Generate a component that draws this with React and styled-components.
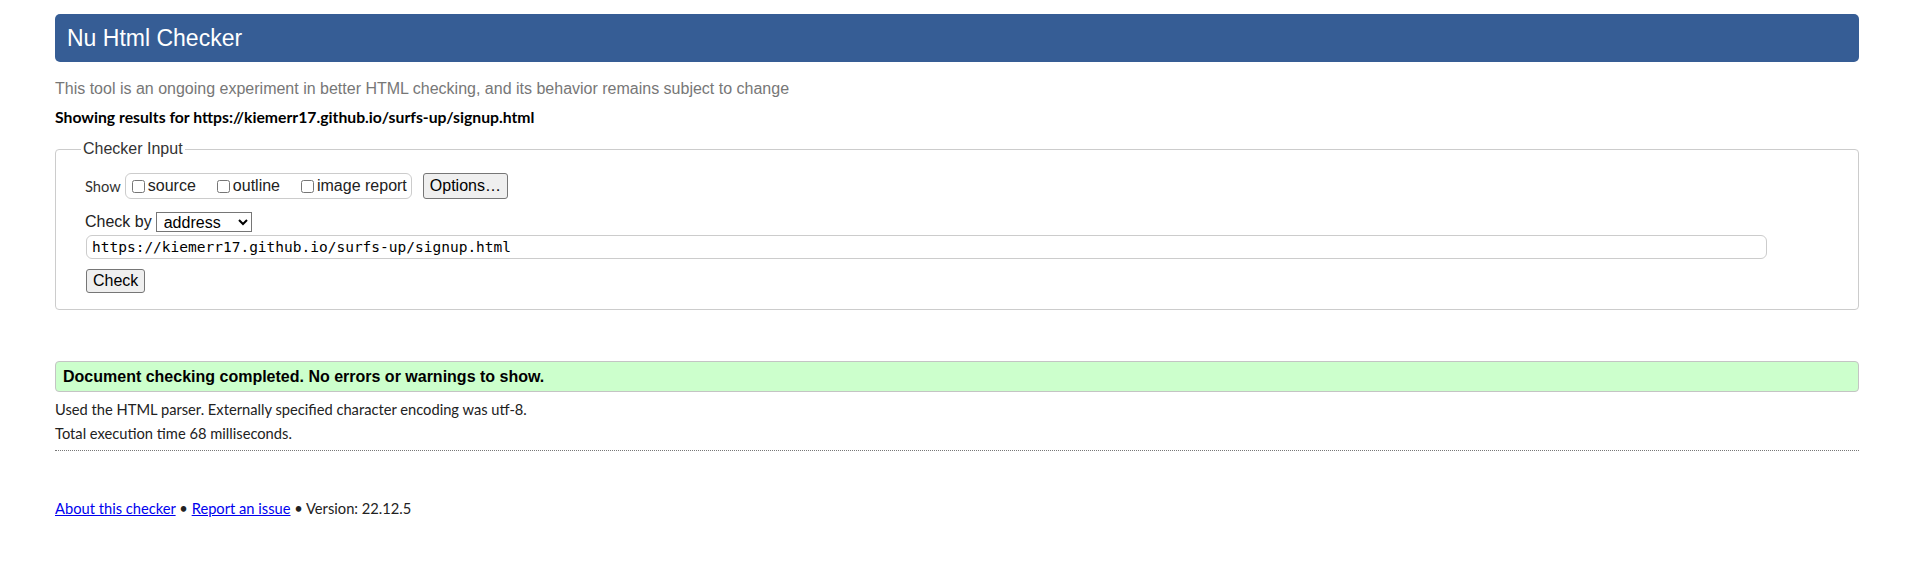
import React from "react";
import styled, { createGlobalStyle } from "styled-components";

const GlobalStyle = createGlobalStyle`
  html, body {
    margin: 0;
    background: #fff;
  }
`;

const sans = `"Liberation Sans", Arial, sans-serif`;
const body = `Lato, "Open Sans", sans-serif`;

export default function App() {
  const url = "https://kiemerr17.github.io/surfs-up/signup.html";
  const shows = ["source", "outline", "image report"];

  return (
    <Page>
      <GlobalStyle />
      <Title>Nu Html Checker</Title>
      <Tagline>
        This tool is an ongoing experiment in better HTML checking, and its
        behavior remains subject to change
      </Tagline>
      <ResultsFor>Showing results for {url}</ResultsFor>

      <Fieldset>
        <Legend>Checker Input</Legend>
        <Row $top={15}>
          <SmallLabel>Show</SmallLabel>
          <CheckGroup>
            {shows.map((s) => (
              <CheckOption key={s}>
                <input type="checkbox" />
                {s}
              </CheckOption>
            ))}
          </CheckGroup>
          <Button $pad={2} $left={11}>
            Options…
          </Button>
        </Row>
        <Row $top={13}>
          <Label>Check by</Label>
          <Select defaultValue="address">
            <option value="address">address</option>
            <option value="file">file upload</option>
            <option value="text">text input</option>
          </Select>
        </Row>
        <Row $top={3}>
          <UrlInput defaultValue={url} />
        </Row>
        <Row $top={10}>
          <Button $pad={1} $left={1}>
            Check
          </Button>
        </Row>
      </Fieldset>

      <Success>Document checking completed. No errors or warnings to show.</Success>
      <Info $top={7}>
        Used the HTML parser. Externally specified character encoding was utf-8.
      </Info>
      <Info $top={4}>Total execution time 68 milliseconds.</Info>
      <Rule />

      <Footer>
        <a href="#about">About this checker</a> • <a href="#issue">Report an issue</a> •
        Version: 22.12.5
      </Footer>
    </Page>
  );
}

const Page = styled.div`
  padding: 14px 58px 40px 55px;
`;

const Title = styled.h1`
  margin: 0;
  height: 48px;
  display: flex;
  align-items: center;
  padding: 0 12px;
  background: #365d95;
  color: #fff;
  font: 400 23px/1 ${sans};
  border-radius: 5px;
`;

const Tagline = styled.p`
  margin: 17px 0 0;
  font: 16px/20px ${sans};
  color: #777;
`;

const ResultsFor = styled.p`
  margin: 8px 0 0;
  font: 700 15.75px/20px ${body};
  color: #000;
`;

const Fieldset = styled.fieldset`
  margin: 13px 0 0;
  padding: 0 14px 16px 29px;
  border: 1px solid #ccc;
  border-radius: 4px;
  min-width: 0;
`;

const Legend = styled.legend`
  margin-left: -4px;
  padding: 0 2px;
  font: 16px/18px ${sans};
  color: #333;
`;

const Row = styled.div`
  display: flex;
  align-items: center;
  margin-top: ${(p) => p.$top}px;
`;

const SmallLabel = styled.span`
  font: 14.7px/20px ${body};
  color: #333;
  margin-right: 4px;
`;

const Label = styled.span`
  font: 16px/20px ${sans};
  color: #222;
`;

const CheckGroup = styled.span`
  display: flex;
  align-items: center;
  gap: 17px;
  height: 26px;
  box-sizing: border-box;
  border: 1px solid #ccc;
  border-radius: 6px;
  padding: 0 4px 0 2px;
`;

const CheckOption = styled.label`
  display: inline-flex;
  align-items: center;
  font: 16px/20px ${sans};
  color: #222;
  input {
    margin: 0 3px 0 4px;
    width: 13px;
    height: 13px;
  }
`;

const Button = styled.button`
  margin-left: ${(p) => p.$left}px;
  padding: ${(p) => p.$pad}px 6px;
  font: 16px/20px ${sans};
  color: #000;
  background: #efefef;
  border: 1px solid #767676;
  border-radius: 3px;
`;

const Select = styled.select`
  margin-left: 4px;
  width: 96px;
  height: 20px;
  font: 16px ${sans};
  color: #000;
  background: #fff;
  border: 1px solid #767676;
  border-radius: 0;
  padding: 0 0 0 3px;
`;

const UrlInput = styled.input`
  margin-left: 1px;
  width: 1681px;
  height: 24px;
  box-sizing: border-box;
  padding: 0 5px;
  border: 1px solid #ccc;
  border-radius: 6px;
  font: 14.5px "DejaVu Sans Mono", "Liberation Mono", monospace;
  color: #000;
  outline: none;
`;

const Success = styled.div`
  margin-top: 51px;
  height: 31px;
  box-sizing: border-box;
  display: flex;
  align-items: center;
  padding: 0 7px;
  background: #ccffcc;
  border: 1px solid #c4c4c4;
  border-radius: 4px;
  font: 700 16px/20px ${sans};
  color: #000;
`;

const Info = styled.p`
  margin: ${(p) => p.$top}px 0 0;
  font: 14.7px/20px ${body};
  color: #222;
`;

const Rule = styled.hr`
  margin: 7px 0 0;
  border: 0;
  border-top: 1px dotted #777;
  height: 0;
`;

const Footer = styled.p`
  margin: 47px 0 0;
  font: 14.7px/20px ${body};
  color: #222;
  a {
    color: #0000ee;
  }
`;
